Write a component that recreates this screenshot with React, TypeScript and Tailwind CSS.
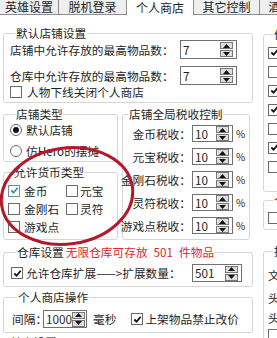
import React from "react";

const Tri = ({ up }: { up?: boolean }) => (
  <svg viewBox="0 0 7 4" className="w-[7px] h-[4px]">
    <path d={up ? "M3.5 0 L7 4 L0 4 Z" : "M0 0 L7 0 L3.5 4 Z"} fill="#111" />
  </svg>
);

const Spin = ({ value, className }: { value: string; className: string }) => (
  <div className={`flex items-center border border-[#707070] bg-white pl-[2px] pr-[3px] ${className}`}>
    <span className="flex-1 leading-none">{value}</span>
    <div className="flex flex-col gap-[1px]">
      <span className="w-[13px] h-[7px] border border-[#777] bg-[#dedede] flex items-center justify-center">
        <Tri up />
      </span>
      <span className="w-[13px] h-[7px] border border-[#777] bg-[#dedede] flex items-center justify-center">
        <Tri />
      </span>
    </div>
  </div>
);

const Check = ({ checked, teal }: { checked?: boolean; teal?: boolean }) => (
  <span
    className={`w-[12px] h-[12px] border bg-white flex items-center justify-center shrink-0 ${
      teal ? "border-[#6f8f9a]" : "border-[#6a6a6a]"
    }`}
  >
    {checked && (
      <svg viewBox="0 0 10 10" className="w-[9px] h-[9px]">
        <path
          d="M1.5 5 L4 7.5 L8.5 2"
          stroke={teal ? "#3a93a8" : "#111"}
          strokeWidth="2"
          fill="none"
        />
      </svg>
    )}
  </span>
);

const Radio = ({ checked }: { checked?: boolean }) => (
  <span className="w-[12px] h-[12px] rounded-full border border-[#6a6a6a] bg-white flex items-center justify-center shrink-0">
    {checked && <span className="w-[6px] h-[6px] rounded-full bg-[#111]" />}
  </span>
);

const Group = ({
  title,
  className,
  children,
}: {
  title: React.ReactNode;
  className: string;
  children?: React.ReactNode;
}) => (
  <fieldset className={`border border-[#d6d6d6] rounded-[3px] min-w-0 ${className}`}>
    <legend className="ml-[5px] px-[1px] leading-[12px] whitespace-nowrap">{title}</legend>
    {children}
  </fieldset>
);

const tabs = [
  { name: "英雄设置", w: "w-[59px]" },
  { name: "脱机登录", w: "w-[68px]" },
  { name: "个人商店", w: "w-[67px]", active: true },
  { name: "其它控制", w: "w-[66px]" },
  { name: "酒馆设置", w: "w-[66px]" },
];

const taxes = ["金币税收：", "元宝税收：", "金刚石税收：", "灵符税收：", "游戏点税收："];
const rightChecks = [true, false, true, true, false, true, false];

export default function App() {
  return (
    <div
      className="relative w-[277px] h-[338px] overflow-hidden bg-white text-[#1e1e1e] text-[11.7px] leading-[12px]"
      style={{ fontFamily: '"Noto Sans CJK SC", "Noto Sans", sans-serif' }}
    >
      {/* tabs */}
      <div className="flex h-[15px] text-[12px] leading-[14px]">
        {tabs.map((t) => (
          <div
            key={t.name}
            className={`${t.w} shrink-0 flex items-center justify-center border-r border-[#8c8c8c] whitespace-nowrap ${
              t.active ? "bg-white" : "bg-[#efefef] border-b"
            }`}
          >
            {t.name}
          </div>
        ))}
      </div>

      <div className="flex">
        {/* left column */}
        <div className="ml-[3px] w-[250px] shrink-0 flex flex-col">
          <Group title="默认店铺设置" className="mt-[12px] pl-[6px] pb-[4px]">
            <div className="flex items-center mt-[1px] h-[19px]">
              <span className="w-[170px] whitespace-nowrap">店铺中允许存放的最高物品数：</span>
              <Spin value="7" className="w-[57px] h-[19px]" />
            </div>
            <div className="flex items-center mt-[7px] h-[19px]">
              <span className="w-[170px] whitespace-nowrap">仓库中允许存放的最高物品数：</span>
              <Spin value="7" className="w-[57px] h-[19px]" />
            </div>
            <div className="flex items-center gap-[5px] h-[13px]">
              <Check />
              <span>人物下线关闭个人商店</span>
            </div>
          </Group>

          <div className="flex mt-[5px]">
            <div className="w-[115px] shrink-0 flex flex-col">
              <Group title="店铺类型" className="pl-[6px] pb-[4px]">
                <div className="flex items-center gap-[4px] h-[13px] mt-[3px]">
                  <Radio checked />
                  <span>默认店铺</span>
                </div>
                <div className="flex items-center gap-[4px] h-[13px] mt-[8px]">
                  <Radio />
                  <span>仿Hero的摆摊</span>
                </div>
              </Group>
              <Group title="允许货币类型" className="mt-[4px] pl-[4px] pb-[6px]">
                <div className="grid grid-cols-[58px_1fr] gap-y-[5px] mt-[6px]">
                  <div className="flex items-center gap-[4px] h-[13px]">
                    <Check checked teal />
                    <span>金币</span>
                  </div>
                  <div className="flex items-center gap-[2px] h-[13px]">
                    <Check />
                    <span>元宝</span>
                  </div>
                  <div className="flex items-center gap-[4px] h-[13px]">
                    <Check />
                    <span className="whitespace-nowrap">金刚石</span>
                  </div>
                  <div className="flex items-center gap-[2px] h-[13px]">
                    <Check />
                    <span>灵符</span>
                  </div>
                  <div className="flex items-center gap-[4px] h-[13px]">
                    <Check />
                    <span className="whitespace-nowrap">游戏点</span>
                  </div>
                </div>
              </Group>
            </div>

            <Group title="店铺全局税收控制" className="ml-[4px] w-[128px] pb-[5px]">
              <div className="flex flex-col gap-[6px] mt-[5px]">
                {taxes.map((t) => (
                  <div key={t} className="flex items-center h-[17px]">
                    <div className="w-[68px] shrink-0 flex justify-end">
                      <span className="whitespace-nowrap">{t}</span>
                    </div>
                    <Spin value="10" className="ml-[1px] w-[41px] h-[17px]" />
                    <span className="ml-[3px] text-[10px]">%</span>
                  </div>
                ))}
              </div>
            </Group>
          </div>

          <Group
            title={
              <>
                仓库设置
                <span className="ml-[2px] text-[#d42b2b]">
                  无限仓库可存放<span className="mx-[6px]">501</span>件物品
                </span>
              </>
            }
            className="mt-[6px] pl-[7px] pb-[4px]"
          >
            <div className="flex items-center h-[18px] mt-[6px]">
              <Check checked />
              <span className="ml-[3px] w-[166px] whitespace-nowrap">允许仓库扩展——&gt;扩展数量：</span>
              <Spin value="501" className="w-[50px] h-[18px]" />
            </div>
          </Group>

          <Group title="个人商店操作" className="mt-[4px] pl-[8px] pb-[4px]">
            <div className="flex items-center h-[18px] mt-[7px]">
              <span className="w-[31px] whitespace-nowrap">间隔：</span>
              <Spin value="1000" className="w-[44px] h-[18px] pl-[1px]" />
              <span className="ml-[6px]">毫秒</span>
              <span className="ml-[15px]">
                <Check checked />
              </span>
              <span className="ml-[2px] whitespace-nowrap">上架物品禁止改价</span>
            </div>
          </Group>

          <Group title="其它设置" className="mt-[3px] h-[20px]" />
        </div>

        {/* right column */}
        <div className="ml-[10px] w-[120px] shrink-0 flex flex-col">
          <Group title="仿盛大摆摊设置" className="mt-[13px] pl-[4px] pb-[18px]">
            <div className="flex flex-col gap-[6px] mt-[6px]">
              {rightChecks.map((c, i) => (
                <div key={i} className="flex items-center gap-[4px] h-[13px]">
                  <Check checked={c} />
                  <span className="whitespace-nowrap">选项</span>
                </div>
              ))}
            </div>
          </Group>
          <Group title="个人商店" className="mt-[2px] pl-[4px] pb-[5px]">
            <div className="flex items-center gap-[4px] h-[13px] mt-[5px]">
              <Check />
              <span className="whitespace-nowrap">显示</span>
            </div>
          </Group>
          <Group title="提示信息" className="mt-[15px] pl-[4px] h-[100px]">
            <div className="mt-[12px] h-[13px] whitespace-nowrap">文字颜色</div>
            <div className="mt-[10px] h-[13px] whitespace-nowrap">头顶显示</div>
            <div className="mt-[7px] h-[13px] whitespace-nowrap">头像设置</div>
            <div className="mt-[4px] h-[18px] border border-[#707070]" />
          </Group>
        </div>
      </div>

      {/* red hand-drawn circle over the currency group */}
      <svg className="absolute left-0 top-0 w-[277px] h-[338px] pointer-events-none" viewBox="0 0 277 338">
        <ellipse
          cx="67"
          cy="196"
          rx="66"
          ry="48"
          transform="rotate(-8 67 196)"
          stroke="#b3192b"
          strokeWidth="3"
          fill="none"
        />
      </svg>
    </div>
  );
}
